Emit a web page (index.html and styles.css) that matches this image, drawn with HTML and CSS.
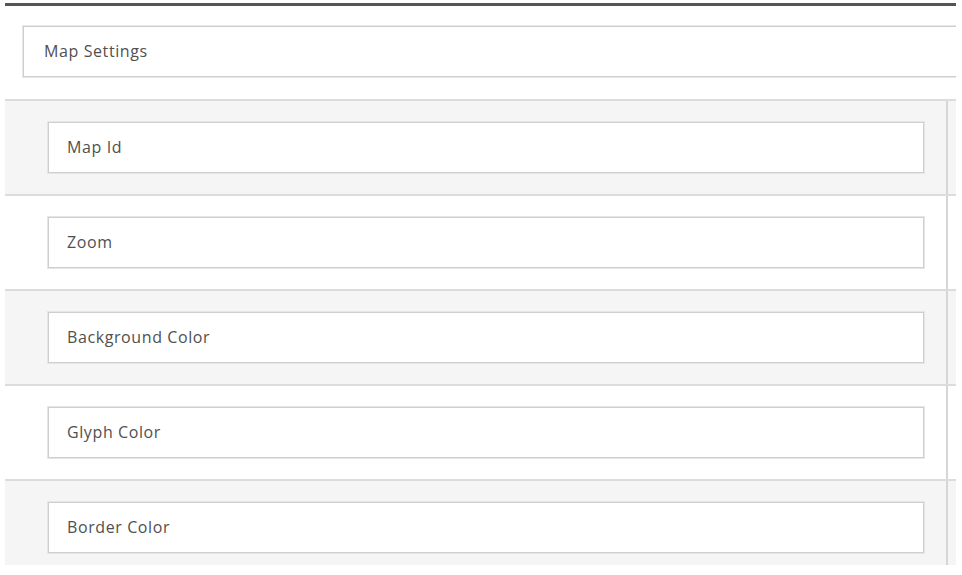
FILE: index.html
```html
<!DOCTYPE html>
<html lang="en">
<head>
    <meta charset="UTF-8">
    <meta name="viewport" content="width=device-width, initial-scale=1.0">
    <title>Map Settings</title>
    <link rel="stylesheet" href="styles.css">
</head>
<body>
    <!-- Settings panel -->
    <div class="panel">
        <div class="panel-head">
            <div class="head-box">Map Settings</div>
        </div>

        <table class="settings">
            <tr class="alt">
                <td class="field-cell"><div class="field">Map Id</div></td>
                <td class="side-cell"></td>
            </tr>
            <tr>
                <td class="field-cell"><div class="field">Zoom</div></td>
                <td class="side-cell"></td>
            </tr>
            <tr class="alt">
                <td class="field-cell"><div class="field">Background Color</div></td>
                <td class="side-cell"></td>
            </tr>
            <tr>
                <td class="field-cell"><div class="field">Glyph Color</div></td>
                <td class="side-cell"></td>
            </tr>
            <tr class="alt">
                <td class="field-cell"><div class="field">Border Color</div></td>
                <td class="side-cell"></td>
            </tr>
        </table>
    </div>
</body>
</html>
```

FILE: styles.css
```css
/* Main Styles */
body {
    font-family: "Open Sans", "Noto Sans", Arial, sans-serif;
    font-size: 16px;
    letter-spacing: 0.6px;
    color: #505050;
    margin: 0;
    padding: 3px 6px 0 5px;
    background-color: white;
}
.panel {
    height: 559px;
    overflow: hidden;
    border-top: 3px solid #555;
}

/* Header */
.panel-head {
    padding: 20px 0 22px 18px;
    border-bottom: 2px solid #dcdcdc;
}
.head-box {
    width: 960px;
    height: 49px;
    line-height: 49px;
    padding-left: 20px;
    border: 1px solid #cfcfcf;
    box-shadow: 0 0 0 1px #e6e6e6;
}

/* Rows */
.settings {
    width: 100%;
    border-collapse: collapse;
}
.settings td {
    padding: 0;
    border-bottom: 2px solid #dcdcdc;
}
.settings tr.alt td {
    background-color: #f5f5f5;
}
.field-cell {
    padding: 21px 22px 21px 43px !important;
}
.side-cell {
    width: 8px;
    border-left: 2px solid #d6d6d6;
}
.field {
    height: 49px;
    line-height: 49px;
    padding-left: 18px;
    background-color: white;
    border: 1px solid #cfcfcf;
    box-shadow: 0 0 0 1px #e6e6e6;
}
```
